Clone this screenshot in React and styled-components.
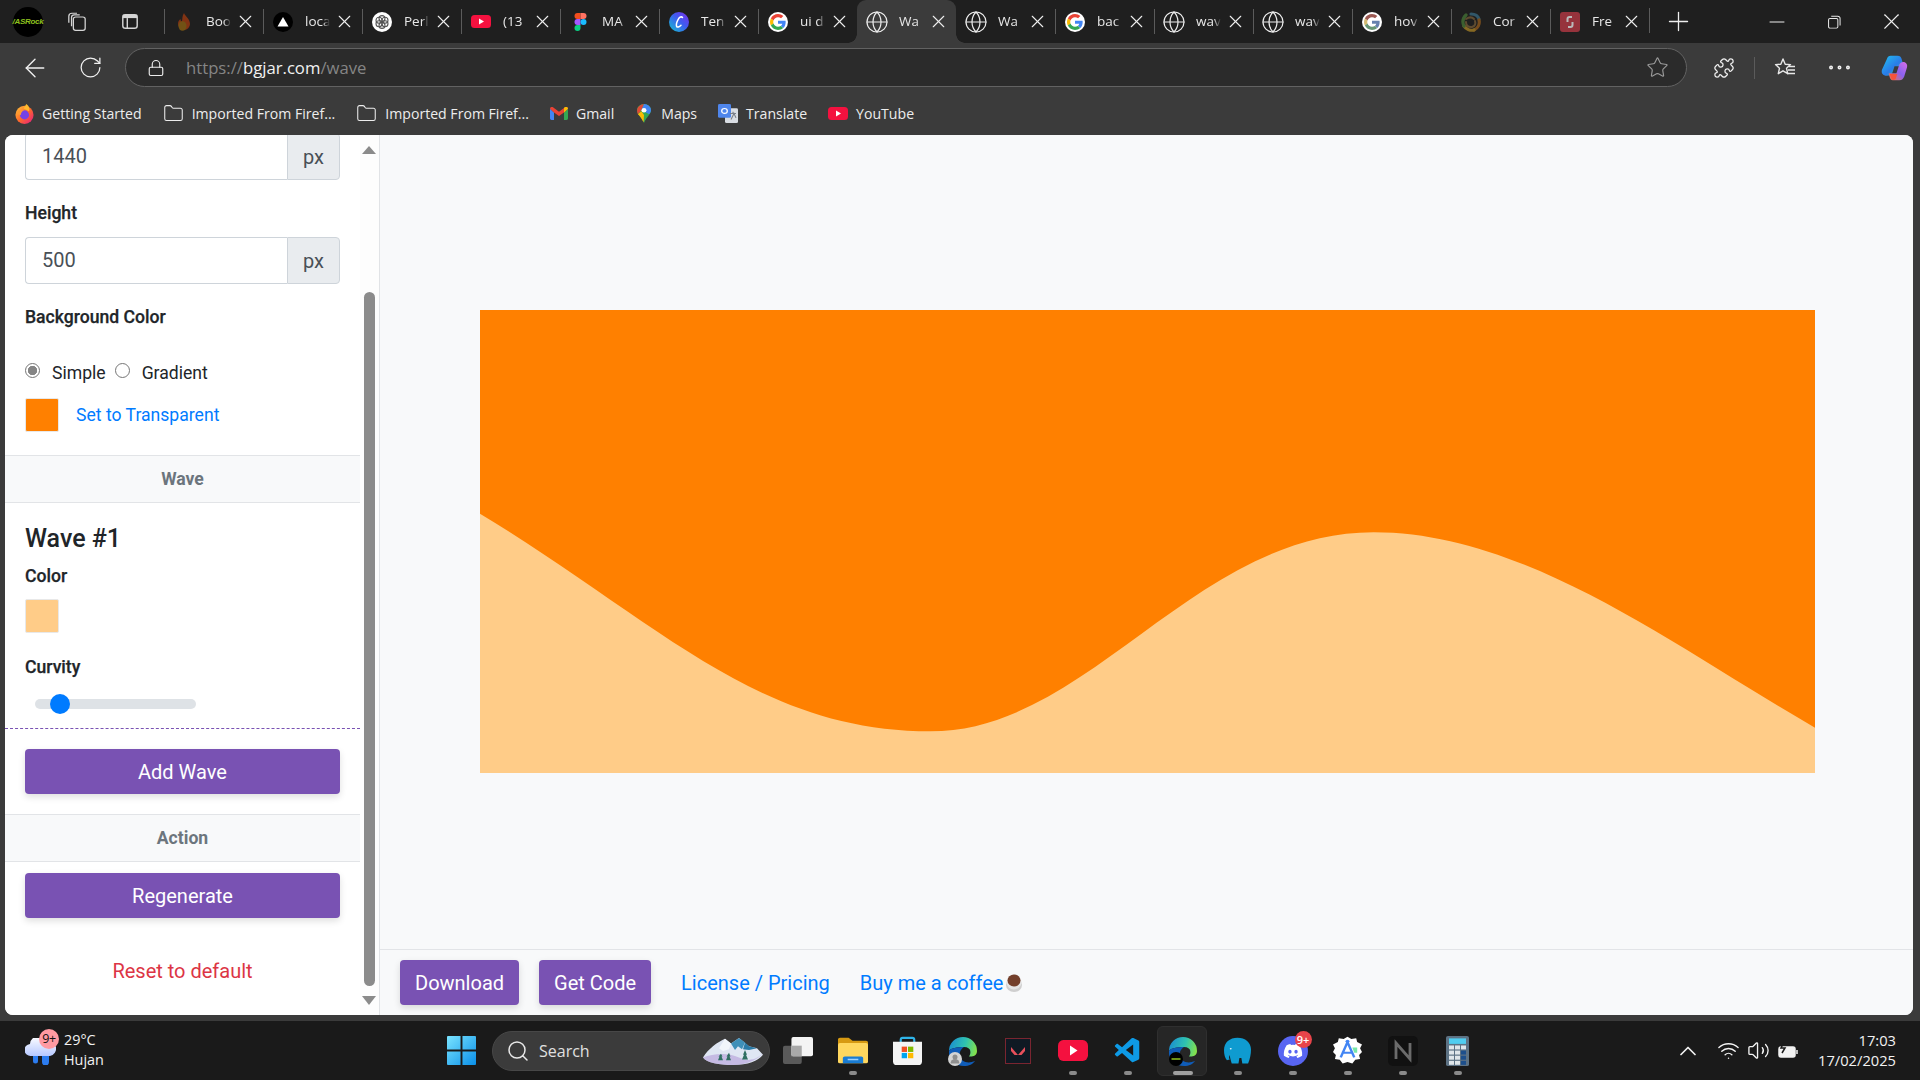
import React from "react";
import styled, { createGlobalStyle } from "styled-components";
import { ArrowLeft, RotateCw, Lock, Star, Minus, Plus, X, Search, Globe, ChevronUp, Wifi, Volume2, Folder, Puzzle, MoreHorizontal } from "lucide-react";
import { FaDiscord } from "react-icons/fa";
import { VscVscode } from "react-icons/vsc";

const Global = createGlobalStyle`
  html, body { margin: 0; padding: 0; background: #3b3b3b; }
  * { box-sizing: border-box; }
  #root { width: 1920px; height: 1080px; overflow: hidden; }
`;

const Shell = styled.div`
  width: 1920px; height: 1080px; display: flex; flex-direction: column;
  background: #3b3b3b; font-family: "Open Sans", "Noto Sans", sans-serif; overflow: hidden;
`;

/* ---------- tab bar ---------- */
const TabBar = styled.div`
  height: 43px; flex: none; display: flex; align-items: stretch; background: #1f1f1f; color: #e8e8e8;
`;
const Leading = styled.div`
  width: 164px; flex: none; display: flex; align-items: center; padding-left: 13px;
`;
const ProfileBadge = styled.div`
  width: 30px; height: 30px; border-radius: 50%; background: #000; display: flex; align-items: center; justify-content: center;
  color: #8fc31f; font: italic 700 8px "Liberation Sans", sans-serif; letter-spacing: -0.3px; white-space: nowrap;
`;
const LeadIcon = styled.div`
  margin-left: ${p => p.$left}px; width: 24px; height: 24px; display: flex; align-items: center; justify-content: center;
`;
const TabStrip = styled.div`display: flex;`;
const Tab = styled.div`
  position: relative; width: 99px; flex: none; display: flex; align-items: center; padding-left: 10px;
  background: ${p => (p.$active ? "#3b3b3b" : "transparent")};
  border-radius: ${p => (p.$active ? "9px 9px 0 0" : "0")};
  &::before {
    content: ""; position: absolute; left: 0; top: 9px; height: 25px; width: 1px;
    background: ${p => (p.$plain ? "transparent" : "#5b5b5b")};
  }
  &::after {
    content: ${p => (p.$active ? '""' : "none")}; position: absolute; left: -9px; right: -9px; bottom: 0; height: 9px; z-index: 0;
    background:
      radial-gradient(circle at 0 0, #1f1f1f 8.5px, #3b3b3b 9px) left bottom / 9px 9px no-repeat,
      radial-gradient(circle at 100% 0, #1f1f1f 8.5px, #3b3b3b 9px) right bottom / 9px 9px no-repeat;
  }
`;
const TabIcon = styled.div`
  width: 20px; height: 20px; flex: none; display: flex; align-items: center; justify-content: center;
  opacity: ${p => (p.$dim ? 0.6 : 1)}; position: relative; z-index: 1;
  > svg { flex: none; }
`;
const TabTitle = styled.div`
  width: 25px; margin: -2px 0 0 12px; flex: none; overflow: hidden; white-space: nowrap; font-size: 13.5px; position: relative; z-index: 1;
  -webkit-mask-image: linear-gradient(90deg, #000 70%, transparent 100%);
  mask-image: linear-gradient(90deg, #000 70%, transparent 100%);
`;
const TabClose = styled.div`
  margin-left: 7px; width: 14px; height: 14px; display: flex; align-items: center; justify-content: center; flex: none; position: relative; z-index: 1;
  > svg { flex: none; }
`;
const EndSeparator = styled.div`
  width: 1px; height: 25px; align-self: center; background: #5b5b5b; margin-top: -2px; flex: none;
`;
const NewTab = styled.div`
  margin-left: 16px; width: 24px; display: flex; align-items: center; justify-content: center; > svg { flex: none; }
`;
const WindowButtons = styled.div`
  margin-left: 75px; display: flex; align-items: center; gap: 33px;
`;
const WinBtn = styled.div`width: 24px; height: 24px; display: flex; align-items: center; justify-content: center; > svg { flex: none; }`;

/* ---------- toolbar ---------- */
const Toolbar = styled.div`height: 45px; flex: none; display: flex; align-items: center; padding: 4px 0 0 23px; color: #f0f0f0;`;
const NavBtn = styled.div`width: 24px; height: 24px; display: flex; align-items: center; justify-content: center; margin-right: ${p => p.$right}px; > svg { flex: none; }`;
const Address = styled.div`
  width: 1562px; height: 39px; border-radius: 20px; border: 1.5px solid #626262; background: #2b2b2b;
  display: flex; align-items: center; padding-left: 21px;
`;
const UrlText = styled.div`
  margin-left: 21px; font-size: 16.7px; color: #858585; flex: 1; white-space: nowrap;
  b { font-weight: 400; color: #f2f2f2; }
`;
const ToolGroup = styled.div`display: flex; align-items: center; margin-left: 26px;`;
const ToolSep = styled.div`width: 1px; height: 22px; background: #5b5b5b; margin: 0 19px;`;

/* ---------- bookmarks ---------- */
const Bookmarks = styled.div`
  height: 47px; flex: none; display: flex; align-items: center; gap: 21px; padding: 4px 0 0 15px; color: #ededed; font-size: 14.1px;
`;
const Bookmark = styled.div`display: flex; align-items: center; gap: 8px; white-space: nowrap; > svg { flex: none; }`;
const PinSlot = styled.div`width: 18px; display: flex; justify-content: center; flex: none;`;

/* ---------- page ---------- */
const Page = styled.div`
  height: 880px; flex: none; margin: 0 7px 0 5px; background: #fff; border-radius: 8px; overflow: hidden; display: flex;
  font-family: Roboto, "Liberation Sans", sans-serif; color: #212529;
`;
const Sidebar = styled.aside`width: 355px; flex: none; overflow: hidden; background: #fff;`;
const SideScroll = styled.div`margin-top: -2px;`;
const Field = styled.div`padding: 0 20px; margin-top: ${p => p.$top || 0}px;`;
const Label = styled.div`font-size: 17.6px; font-weight: 500; line-height: 24px; -webkit-text-stroke: 0.25px #212529;`;
const InputGroup = styled.div`display: flex; height: 47px;`;
const NumInput = styled.input`
  flex: 1; min-width: 0; height: 100%; border: 1px solid #ced4da; border-right: 0; border-radius: 4px 0 0 4px; padding: 0 16px 2px;
  font: 400 20px Roboto, sans-serif; color: #495057; outline: none; background: #fff;
`;
const Unit = styled.div`
  width: 53px; flex: none; border: 1px solid #ced4da; border-radius: 0 4px 4px 0; background: #e9ecef; color: #495057;
  display: flex; align-items: center; justify-content: center; font-size: 20px;
`;
const RadioRow = styled.div`display: flex; align-items: center; height: 24px; font-size: 17.6px;`;
const Radio = styled.input`
  appearance: none; width: 15px; height: 15px; margin: -6px 12px 0 0; border-radius: 50%; border: 1.5px solid #767676; background: #fff; flex: none;
  &:checked { background: radial-gradient(circle, #858585 0 4.4px, #fff 4.9px); }
`;
const RadioText = styled.span`margin-right: 9px;`;
const SwatchRow = styled.div`display: flex; align-items: center; gap: 17px;`;
const Swatch = styled.div`width: 34px; height: 34px; border-radius: 2px; border: 1px solid #e8e8e8; background: ${p => p.$color};`;
const LinkText = styled.a`color: #007bff; font-size: ${p => p.$size || 17.6}px; text-decoration: none; white-space: nowrap;`;
const SectionHead = styled.div`
  margin-top: ${p => p.$top}px; height: 48px; background: #f8f9fa; border-top: 1px solid #e2e4e7; border-bottom: 1px solid #e2e4e7;
  display: flex; align-items: center; justify-content: center; color: #6c757d; font-size: 17.6px; font-weight: 700;
`;
const WaveTitle = styled.h4`margin: 0; font-size: 25px; font-weight: 500; line-height: 29px;`;
const Slider = styled.input`
  appearance: none; display: block; width: 161px; height: 10px; margin: 0 0 0 10px; border-radius: 5px; background: #dee2e6; outline: none;
  &::-webkit-slider-thumb { appearance: none; width: 20px; height: 20px; border-radius: 50%; background: #007bff; border: 0; }
`;
const Dashed = styled.div`margin-top: 19px; border-top: 1px dashed #7952b3;`;
const WideButton = styled.div`
  height: 45px; background: #7952b3; color: #fff; border-radius: 4px; display: flex; align-items: center; justify-content: center;
  font-size: 20px; box-shadow: 0 3px 7px rgba(0,0,0,.13);
`;
const Reset = styled.div`margin-top: 41px; text-align: center; color: #dc3545; font-size: 20px; line-height: 24px;`;

const Rail = styled.div`
  width: 20px; flex: none; background: #fdfdfd; border-right: 1px solid #e1e3e6; display: flex; flex-direction: column; align-items: center; padding-right: 1px;
`;
const ArrowUp = styled.div`
  margin-top: 11px; width: 0; height: 0; border-left: 7px solid transparent; border-right: 7px solid transparent; border-bottom: 8px solid #8b8b8b;
`;
const Thumb = styled.div`width: 11px; height: 694px; margin-top: 138px; border-radius: 6px; background: #8b8b8b;`;
const ArrowDown = styled.div`
  margin-top: 10px; width: 0; height: 0; border-left: 7px solid transparent; border-right: 7px solid transparent; border-top: 9px solid #8b8b8b;
`;

const Main = styled.main`flex: 1; min-width: 0; background: #f8f9fa; display: flex; flex-direction: column;`;
const Stage = styled.div`flex: 1; display: flex; align-items: center; justify-content: center; padding: 0 0 2px 2px;`;
const WaveSvg = styled.svg`width: 1335px; height: 463px; display: block; flex: none;`;
const Footer = styled.div`
  height: 66px; flex: none; border-top: 1px solid #e2e4e7; display: flex; align-items: center; padding-left: 20px;
`;
const FootButton = styled.div`
  height: 45px; padding: 0 15px; background: #7952b3; color: #fff; border-radius: 4px; display: flex; align-items: center; font-size: 20px;
  box-shadow: 0 3px 7px rgba(0,0,0,.13); margin-right: ${p => p.$right}px;
`;
const FootLink = styled(LinkText)`margin-right: ${p => p.$right || 0}px; display: flex; align-items: center;`;

/* ---------- taskbar ---------- */
const Taskbar = styled.div`
  margin-top: 6px; height: 59px; flex: none; background: #1a1a1a; color: #f2f2f2; display: flex; align-items: center; font-size: 14px;
`;
const Weather = styled.div`width: 447px; flex: none; display: flex; align-items: center; padding-left: 25px; height: 100%;`;
const WeatherIcon = styled.div`position: relative; width: 31px; height: 27px; margin-top: 1px; > svg { display: block; }`;
const Badge = styled.div`
  position: absolute; left: 14px; top: -9px; width: 20px; height: 20px; border-radius: 50%; background: #ff9aa2; color: #111; font-size: 12.5px;
  display: flex; align-items: center; justify-content: center; letter-spacing: -.3px;
`;
const WeatherText = styled.div`margin-left: 8px; line-height: 20px; font-size: 14.4px; margin-top: -2px;`;
const SearchBox = styled.div`
  width: 278px; height: 40px; margin-left: 16px; border-radius: 20px; background: #3b3b3b; border: 1px solid #474747; display: flex; align-items: center; padding-left: 13px; font-size: 16px; color: #e0e0e0;
  flex: none; > svg { flex: none; }
`;
const SearchText = styled.div`margin-left: 9px; flex: 1;`;
const Apps = styled.div`display: flex; height: 100%; align-items: center;`;
const TaskApp = styled.div`
  position: relative; width: 55px; height: 50px; display: flex; align-items: center; justify-content: center;
  &::before {
    content: ${p => (p.$active ? '""' : "none")}; position: absolute; left: 2px; right: 3px; top: 0; bottom: 0; border-radius: 6px; background: #262626; border: 1px solid #2f2f2f;
  }
  &::after {
    content: ${p => (p.$run || p.$active ? '""' : "none")}; position: absolute; bottom: 1px; left: 50%; transform: translateX(-50%);
    width: ${p => (p.$active ? 20 : 8)}px; height: 4px; border-radius: 2px; background: ${p => (p.$active ? "#a0a0a0" : "#8a8a8a")};
  }
  > svg, > div { position: relative; z-index: 1; flex: none; }
`;
const Tray = styled.div`margin-left: auto; display: flex; align-items: center; padding-right: 24px;`;
const TrayIcon = styled.div`width: 22px; height: 22px; display: flex; align-items: center; justify-content: center; margin-right: ${p => p.$right}px; > svg { flex: none; }`;
const Clock = styled.div`text-align: right; line-height: 20px; font-size: 14.7px; margin: -2px 0 0 3px;`;
const DiscordDisc = styled.div`
  width: 30px; height: 30px; border-radius: 50%; background: #5865f2; color: #fff; display: flex; align-items: center; justify-content: center; position: relative;
`;
const DiscordBadge = styled.div`
  position: absolute; right: -4px; top: -5px; width: 17px; height: 17px; border-radius: 50%; background: #e8444a; color: #fff; font-size: 11px; font-weight: 600;
  display: flex; align-items: center; justify-content: center;
`;
const CopilotSlot = styled.div`margin-left: 27px; display: flex;`;

/* ---------- drawings ---------- */
const GoogleG = ({ dim }) => (
  <svg width="20" height="20" viewBox="-6 -6 60 60" style={dim ? { filter: "saturate(.4)" } : undefined}>
    <circle cx="24" cy="24" r="30" fill="#fff" />
    <path fill="#EA4335" d="M24 9.5c3.54 0 6.71 1.22 9.21 3.6l6.85-6.85C35.9 2.38 30.47 0 24 0 14.62 0 6.51 5.38 2.56 13.22l7.98 6.19C12.43 13.72 17.74 9.5 24 9.5z" />
    <path fill="#4285F4" d="M46.98 24.55c0-1.57-.15-3.09-.38-4.55H24v9.02h12.94c-.58 2.96-2.26 5.48-4.78 7.18l7.73 6c4.51-4.18 7.09-10.36 7.09-17.65z" />
    <path fill="#FBBC05" d="M10.53 28.59c-.48-1.45-.76-2.99-.76-4.59s.27-3.14.76-4.59l-7.98-6.19C.92 16.46 0 20.12 0 24c0 3.88.92 7.54 2.56 10.78l7.97-6.19z" />
    <path fill="#34A853" d="M24 48c6.48 0 11.93-2.13 15.89-5.81l-7.73-6c-2.15 1.45-4.92 2.3-8.16 2.3-6.26 0-11.57-4.22-13.47-9.91l-7.98 6.19C6.51 42.62 14.62 48 24 48z" />
  </svg>
);
const Flame = () => (
  <svg width="16" height="18" viewBox="0 0 16 18">
    <path d="M8 0c1 3 6 6 6 11a6 6 0 0 1-12 0c0-3 1.500-4 2.500-5 0 1.500.5 2.500 1.500 2.500C6.500 6 6 3 8 0z" fill="#c2410c" />
    <ellipse cx="6.500" cy="13" rx="4" ry="4.800" fill="#a8740f" />
  </svg>
);
const TriangleIcon = () => (
  <svg width="20" height="20" viewBox="0 0 20 20"><circle cx="10" cy="10" r="10" fill="#000" /><path d="M10 5l5.500 9.500h-11z" fill="#fff" /></svg>
);
const KnotIcon = () => (
  <svg width="20" height="20" viewBox="0 0 20 20">
    <circle cx="10" cy="10" r="10" fill="#fff" />
    <g fill="none" stroke="#555" strokeWidth="1.100">
      <circle cx="10" cy="6.600" r="3" /><circle cx="13" cy="8.300" r="3" /><circle cx="13" cy="11.700" r="3" />
      <circle cx="10" cy="13.400" r="3" /><circle cx="7" cy="11.700" r="3" /><circle cx="7" cy="8.300" r="3" />
    </g>
  </svg>
);
const YouTube = ({ w = 20, h = 13 }) => (
  <svg width={w} height={h} viewBox="0 0 20 13" preserveAspectRatio="none"><rect width="20" height="13" rx="3.500" fill="#f4113f" /><path d="M8 3.400l5 3.100-5 3.100z" fill="#fff" /></svg>
);
const Figma = () => (
  <svg width="13" height="18" viewBox="0 0 12 18">
    <path d="M3 0h3v6H3a3 3 0 0 1 0-6z" fill="#f24e1e" />
    <path d="M6 0h3a3 3 0 0 1 0 6H6z" fill="#ff7262" />
    <path d="M3 6h3v6H3a3 3 0 0 1 0-6z" fill="#a259ff" />
    <circle cx="9" cy="9" r="3" fill="#1abcfe" />
    <path d="M3 12h3v3a3 3 0 1 1-3-3z" fill="#0acf83" />
  </svg>
);
const Canva = () => (
  <svg width="20" height="20" viewBox="0 0 20 20">
    <defs><linearGradient id="cv" x1="0" y1="1" x2="1" y2="0"><stop offset="0" stopColor="#12c4cf" /><stop offset=".55" stopColor="#3f5cf0" /><stop offset="1" stopColor="#7d2ae8" /></linearGradient></defs>
    <circle cx="10" cy="10" r="10" fill="url(#cv)" />
    <path d="M13.500 5.500c-1-1.300-3-.4-4 1.300S7 12 7.500 14s3 .8 4.500-.8" fill="none" stroke="#fff" strokeWidth="1.500" strokeLinecap="round" />
  </svg>
);
const Swirl = () => (
  <svg width="20" height="20" viewBox="0 0 20 20">
    <g fill="none" strokeWidth="3.200" strokeLinecap="round">
      <path d="M10 2c4 0 7 2 8 5" stroke="#3d7d9b" /><path d="M18 8c1 4-1 8-5 10" stroke="#b06b1d" />
      <path d="M13 18c-4 1-8-1-10-4" stroke="#c99b26" /><path d="M3 14C1 10 2 6 5 3" stroke="#4e8a3a" />
      <path d="M5 7c3-2 6-2 8 0M14 9c1 3 0 5-3 6M10 15c-3 0-5-2-5-5" stroke="#8a6a3c" strokeWidth="2" />
    </g>
  </svg>
);
const RedSquare = () => (
  <svg width="20" height="20" viewBox="0 0 20 20">
    <rect width="20" height="20" rx="3" fill="#96333c" />
    <path d="M12 5H9.500a2 2 0 0 0-2 2v3M8 15h2.500a2 2 0 0 0 2-2v-3" fill="none" stroke="#b9b9b9" strokeWidth="2" />
  </svg>
);
const Firefox = () => (
  <svg width="19" height="20" viewBox="0 0 20 22">
    <defs><linearGradient id="ff" x1="0" y1="0" x2="1" y2="1"><stop offset="0" stopColor="#ffc83a" /><stop offset=".5" stopColor="#ff6a2a" /><stop offset="1" stopColor="#e31587" /></linearGradient></defs>
    <circle cx="10" cy="12" r="10" fill="url(#ff)" />
    <path d="M12 0c3 2 4 5 3 8L9 5z" fill="#ffb92e" />
    <circle cx="10" cy="12" r="5" fill="#7542e5" />
    <path d="M1 11c3-4 6-4 9-4-3 1-4 3-4 5z" fill="#ff9a2e" />
  </svg>
);
const Gmail = () => (
  <svg width="18" height="13" viewBox="0 0 18 14" preserveAspectRatio="none">
    <path d="M0 2v10.500A1.500 1.500 0 0 0 1.500 14H4V6z" fill="#4285f4" />
    <path d="M14 6v8h2.500A1.500 1.500 0 0 0 18 12.500V2z" fill="#34a853" />
    <path d="M0 2c0-2 2-2.500 3-1.700L9 5l6-4.700C16-.5 18 0 18 2l-4 4-5 3.800L4 6z" fill="#ea4335" />
    <path d="M14 .9V6l4-4c0-2-2-2.500-3-1.700z" fill="#fbbc04" />
  </svg>
);
const MapsPin = () => (
  <svg width="14" height="19" viewBox="0 0 16 24" preserveAspectRatio="none">
    <path d="M8 0a8 8 0 0 1 8 8c0 5-5 8-8 16C5 16 0 13 0 8a8 8 0 0 1 8-8z" fill="#34a853" />
    <path d="M2 3a8 8 0 0 1 6-3l-3 8L1 13C-.5 9 0 5 2 3z" fill="#ea4335" opacity=".95" />
    <path d="M8 0a8 8 0 0 1 8 8c0 2-1 3-2 5L5 8z" fill="#4285f4" />
    <path d="M1 13l4-4 3 5-.5 9C5 18 3 15 1 13z" fill="#fbbc04" />
    <circle cx="8" cy="8" r="2.800" fill="#fff" />
  </svg>
);
const Translate = () => (
  <svg width="20" height="19" viewBox="0 0 20 22" preserveAspectRatio="none">
    <rect x="7" y="5" width="13" height="17" rx="1.500" fill="#d9dde3" />
    <rect width="13" height="16" rx="1.500" fill="#4f86ec" />
    <circle cx="6.500" cy="8" r="2.800" fill="none" stroke="#fff" strokeWidth="1.300" />
    <path d="M12 11h6M15 9v2M13 18l3-7 2 5" fill="none" stroke="#7a808a" strokeWidth="1.100" />
  </svg>
);
const Tabs2 = () => (
  <svg width="20" height="20" viewBox="0 0 22 24" preserveAspectRatio="none" fill="none" stroke="#d5d5d5" strokeWidth="1.400">
    <rect x="7" y="6" width="13" height="16" rx="2.500" /><path d="M5 17V6.500A3 3 0 0 1 8 3.500h6" /><path d="M2 13V5a3.500 3.500 0 0 1 3.500-3.500H11" />
  </svg>
);
const VTabs = () => (
  <svg width="18" height="17" viewBox="0 0 20 20" preserveAspectRatio="none" fill="none" stroke="#d5d5d5" strokeWidth="1.600">
    <rect x="2" y="2" width="16" height="16" rx="3" /><path d="M7 6v12" />
    <rect x="2" y="2" width="16" height="4" fill="#d5d5d5" stroke="none" />
  </svg>
);
const Restore = () => (
  <svg width="13" height="14" viewBox="0 0 14 16" preserveAspectRatio="none" fill="none" stroke="#e8e8e8" strokeWidth="1.100">
    <rect x=".6" y="4" width="10" height="11" rx="1.500" /><path d="M3.500 1.500h7a2.500 2.500 0 0 1 2.500 2.500v8" />
  </svg>
);
const FavStar = () => (
  <svg width="22" height="22" viewBox="0 0 22 22" fill="none" stroke="#e8e8e8" strokeWidth="1.400" strokeLinejoin="round">
    <path d="M9 2l2.200 5.200 5.300.4-4 3.600 1.200 5.500L9 13.800l-4.700 2.900 1.200-5.500-4-3.600 5.300-.4z" />
    <path d="M15 10.500h6M14 14h7M13.500 17.500H21" transform="translate(0 -1)" />
  </svg>
);
const Copilot = () => (
  <svg width="27" height="26" viewBox="0 0 28 30" preserveAspectRatio="none">
    <defs>
      <linearGradient id="cpa" x1="0" y1="0" x2="1" y2="1"><stop offset="0" stopColor="#22c3f0" /><stop offset=".55" stopColor="#2a7be8" /><stop offset="1" stopColor="#3fd98e" /></linearGradient>
      <linearGradient id="cpb" x1="1" y1="0" x2="0" y2="1"><stop offset="0" stopColor="#d96ee8" /><stop offset=".5" stopColor="#8a62f0" /><stop offset="1" stopColor="#f6743c" /></linearGradient>
    </defs>
    <path d="M10 1h7c3 0 4 2 4.500 4l2 8H14l-2 7c-1 3-3 4-6 4-4 0-6-3-5-7L6 5c1-3 2-4 4-4z" fill="url(#cpa)" />
    <path d="M12 29h7c3 0 4-2 5-4l3-11c.8-3-1-6-4-6-2 0-3 1-4 3l-3 10H8c.5 3 1.500 8 4 8z" fill="url(#cpb)" />
    <path d="M9 22h8l-2 6c-2 1-3 1-4 0z" fill="#f6533a" />
  </svg>
);
const Windows = () => (
  <svg width="29" height="29" viewBox="0 0 30 30" style={{ flex: "none" }}>
    <defs><linearGradient id="wn" x1="0" y1="0" x2="1" y2="1"><stop offset="0" stopColor="#7ae4ff" /><stop offset="1" stopColor="#0a8fe8" /></linearGradient></defs>
    <path d="M0 1a1 1 0 0 1 1-1h13v14H0zM16 0h13a1 1 0 0 1 1 1v13H16zM0 16h14v14H1a1 1 0 0 1-1-1zM16 16h14v13a1 1 0 0 1-1 1H16z" fill="url(#wn)" />
  </svg>
);
const Cloud = () => (
  <svg width="31" height="27" viewBox="0 0 31 27">
    <defs><linearGradient id="cl" x1="0" y1="0" x2="0" y2="1"><stop offset="0" stopColor="#fff" /><stop offset="1" stopColor="#b6c8ff" /></linearGradient></defs>
    <path d="M8 16v7a2.500 2.500 0 0 0 5 0v-7zM17 16v8a3.500 3.500 0 0 0 7 0v-8z" fill="#2c7cf0" />
    <path d="M6 18a6 6 0 0 1-1-12 9 9 0 0 1 17-3 7.500 7.500 0 0 1 3 15z" fill="url(#cl)" />
  </svg>
);
const Mountain = () => (
  <svg width="60" height="28" viewBox="0 0 60 30" preserveAspectRatio="none" style={{ marginRight: 6, flex: "none" }}>
    <path d="M0 22C6 12 14 6 22 2l6 5 8-6 10 9 8 2 6 7c-5 7-15 11-30 11C16 30 4 28 0 22z" fill="#dfe6f3" />
    <path d="M22 2l6 5-2 6-6 2-4-3z" fill="#f2f6fb" />
    <path d="M28 7l8-6 6 5-3 7-4-3-3 4z" fill="#3f8fb8" />
    <path d="M42 6l4 4 8 2-8 2-6-1z" fill="#2b7aa6" />
    <path d="M0 22c10-4 24-6 36 0s20 0 24-5c-5 7-15 13-30 13C16 30 4 28 0 22z" fill="#b9a6dc" opacity=".7" />
    <path d="M42 14l2 5h-1l2 5h-6l2-5h-1zM18 18l1.500 3h-1l1.500 4h-5l1.500-4h-1zM26 17l1.500 4h-1l1.500 4h-5l1.500-4h-1z" fill="#2f6f62" />
  </svg>
);
const TaskView = () => (
  <svg width="30" height="27" viewBox="0 0 32 28" preserveAspectRatio="none">
    <rect x="0" y="9" width="20" height="19" rx="2" fill="#5a5a5a" />
    <rect x="9" y="0" width="23" height="20" rx="2" fill="#f4f4f4" />
    <rect x="9" y="9" width="11" height="11" fill="#a9a9a9" />
  </svg>
);
const Explorer = () => (
  <svg width="30" height="27" viewBox="0 0 31 36" preserveAspectRatio="none">
    <path d="M0 3a2 2 0 0 1 2-2h9l4 4h14a2 2 0 0 1 2 2v8H0z" fill="#d79a12" />
    <rect y="8" width="31" height="27" rx="2" fill="#ffd75e" />
    <path d="M5 35v-7a2 2 0 0 1 2-2h17a2 2 0 0 1 2 2v7z" fill="#1a7cd3" />
    <rect x="10" y="29" width="11" height="2" fill="#9fd2ff" />
  </svg>
);
const Store = () => (
  <svg width="29" height="29" viewBox="0 0 30 30">
    <path d="M8 7V4a2 2 0 0 1 2-2h10a2 2 0 0 1 2 2v3" fill="none" stroke="#2fb4e8" strokeWidth="2.200" />
    <path d="M0 6h30v20a4 4 0 0 1-4 4H4a4 4 0 0 1-4-4z" fill="#f4f4f4" />
    <rect x="9" y="11" width="5.500" height="5.500" fill="#f25022" /><rect x="15.500" y="11" width="5.500" height="5.500" fill="#7fba00" />
    <rect x="9" y="17.500" width="5.500" height="5.500" fill="#00a4ef" /><rect x="15.500" y="17.500" width="5.500" height="5.500" fill="#ffb900" />
  </svg>
);
const Edge = ({ id, kind }) => (
  <svg width="30" height="30" viewBox="0 0 30 30">
    <defs>
      <linearGradient id={id} x1="0" y1=".4" x2="1" y2=".6"><stop offset="0" stopColor="#1b8fd0" /><stop offset=".55" stopColor="#2fc3b0" /><stop offset="1" stopColor="#86e24a" /></linearGradient>
    </defs>
    <path d="M1 15A14 14 0 0 1 29 15C29 20 24 21 21 20.500C23 18 24 11 16 11C9 11 3 12 1 15Z" fill={`url(#${id})`} />
    <path d="M1 15C0 24 8 30 16 30C21 30 25 28 27 25C20 28 13 26 12 20C11 16 13 13 16 11C9 11 3 12 1 15Z" fill="#0f5cb8" />
    {kind === "user" && <g><circle cx="7" cy="23" r="7" fill="#d4d4d4" /><circle cx="7" cy="21" r="2.500" fill="#8e8e8e" /><path d="M2.500 27.500a4.500 4.500 0 0 1 9 0z" fill="#8e8e8e" /></g>}
    {kind === "rock" && <g><circle cx="8" cy="23" r="7" fill="#000" /><path d="M3.500 23h9" stroke="#8fc31f" strokeWidth="1.500" /></g>}
  </svg>
);
const Valorant = () => (
  <svg width="26" height="26" viewBox="0 0 26 26">
    <rect x=".5" y=".5" width="25" height="25" fill="#0f1923" stroke="#7a2530" />
    <path d="M6 9l7 8H9.500L6 13zM20 9v4l-3.500 4H13z" fill="#e8505b" />
  </svg>
);
const Elephant = () => (
  <svg width="27" height="28" viewBox="0 0 28 36" preserveAspectRatio="none">
    <path d="M14 1c8 0 14 6 14 15 0 6-1 12-3 18h-6l-1-7h-2l-1 7H8c-1-5-2-8-2-11-1 2-1 4 0 6l-3 1c-2-3-3-8-3-13C0 7 6 1 14 1z" fill="#0f9bd0" />
    <circle cx="7" cy="15" r="1" fill="#e5f6ff" />
  </svg>
);
const Studio = () => (
  <svg width="29" height="29" viewBox="0 0 30 38" preserveAspectRatio="none">
    <path d="M15 1l4 3 5-1 1 5 5 3-2 5 2 5-3 4 1 5-5 1-3 5-5-2-5 2-3-5-5-1 1-5-3-4 2-5-2-5 5-3 1-5 5 1z" fill="#fff" />
    <circle cx="15" cy="7" r="2" fill="#4285f4" />
    <path d="M15 8l-7 20M15 8l7 20M9 22h12" fill="none" stroke="#4285f4" strokeWidth="2.500" />
    <path d="M20 15h5v7h-3z" fill="#3ddc84" opacity=".7" />
  </svg>
);
const NLogo = () => (
  <svg width="30" height="30" viewBox="0 0 30 30">
    <rect width="30" height="30" rx="5" fill="#111" />
    <path d="M8 23V7l14 16V7" fill="none" stroke="#6b6b6b" strokeWidth="2.800" />
  </svg>
);
const Calc = () => (
  <svg width="23" height="30" viewBox="0 0 23 38" preserveAspectRatio="none">
    <rect width="23" height="38" rx="2" fill="#5d7284" />
    <rect x="3" y="3" width="17" height="7" fill="#50cdf0" />
    {[12, 18.5, 25, 31.5].map(y => [3, 9, 15].map(x => (
      <rect key={`${x}${y}`} x={x} y={y} width="5" height="5" fill={x === 15 && y > 15 ? "#1d4f8c" : "#dfe6ea"} />
    )))}
  </svg>
);
const Coffee = () => (
  <svg width="16" height="18" viewBox="0 0 16 18" style={{ marginLeft: 3 }}>
    <ellipse cx="8" cy="11" rx="8" ry="7" fill="#cfcfcf" />
    <ellipse cx="8" cy="8" rx="7.500" ry="7.500" fill="#e6e6e6" />
    <ellipse cx="8" cy="6.500" rx="6.500" ry="6" fill="#74402b" />
  </svg>
);

const XIcon = <X size={21} strokeWidth={1.3} color="#eee" />;
const GlobeIcon = <Globe size={24} strokeWidth={1.2} color="#eee" />;
const tabs = [
  { t: "Boo", i: <Flame />, d: true }, { t: "loca", i: <TriangleIcon /> }, { t: "Perl", i: <KnotIcon /> },
  { t: "(13", i: <YouTube /> }, { t: "MA", i: <Figma /> }, { t: "Ten", i: <Canva /> }, { t: "ui d", i: <GoogleG /> },
  { t: "Wa", i: GlobeIcon, a: true }, { t: "Wa", i: GlobeIcon, plain: true }, { t: "bac", i: <GoogleG /> },
  { t: "wav", i: GlobeIcon }, { t: "wav", i: GlobeIcon }, { t: "hov", i: <GoogleG dim /> }, { t: "Cor", i: <Swirl />, d: true }, { t: "Fre", i: <RedSquare /> },
];

export default function App() {
  return (
    <Shell>
      <Global />
      <TabBar>
        <Leading>
          <ProfileBadge>/ASRock</ProfileBadge>
          <LeadIcon $left={22}><Tabs2 /></LeadIcon>
          <LeadIcon $left={29}><VTabs /></LeadIcon>
        </Leading>
        <TabStrip>
          {tabs.map((x, i) => (
            <Tab key={i} $active={x.a} $plain={x.a || x.plain}>
              <TabIcon $dim={x.d}>{x.i}</TabIcon>
              <TabTitle>{x.t}</TabTitle>
              <TabClose>{XIcon}</TabClose>
            </Tab>
          ))}
        </TabStrip>
        <EndSeparator />
        <NewTab><Plus size={31} strokeWidth={1} color="#eee" /></NewTab>
        <WindowButtons>
          <WinBtn><Minus size={24} strokeWidth={1} color="#eee" /></WinBtn>
          <WinBtn><Restore /></WinBtn>
          <WinBtn><X size={27} strokeWidth={1} color="#eee" /></WinBtn>
        </WindowButtons>
      </TabBar>

      <Toolbar>
        <NavBtn $right={31}><ArrowLeft size={30} strokeWidth={1.1} /></NavBtn>
        <NavBtn $right={23}><RotateCw size={25} strokeWidth={1.2} /></NavBtn>
        <Address>
          <Lock size={18} strokeWidth={1.5} color="#eee" />
          <UrlText>https://<b>bgjar.com</b>/wave</UrlText>
          <Star size={23} strokeWidth={1.2} color="#9a9a9a" style={{ marginRight: 17 }} />
        </Address>
        <ToolGroup>
          <Puzzle size={22} strokeWidth={1.4} />
          <ToolSep />
          <FavStar />
          <MoreHorizontal size={29} strokeWidth={1.3} style={{ marginLeft: 29 }} />
          <CopilotSlot><Copilot /></CopilotSlot>
        </ToolGroup>
      </Toolbar>

      <Bookmarks>
        <Bookmark><Firefox />Getting Started</Bookmark>
        <Bookmark><Folder size={21} strokeWidth={1.2} />Imported From Firef...</Bookmark>
        <Bookmark><Folder size={21} strokeWidth={1.2} />Imported From Firef...</Bookmark>
        <Bookmark><Gmail />Gmail</Bookmark>
        <Bookmark><PinSlot><MapsPin /></PinSlot>Maps</Bookmark>
        <Bookmark><Translate />Translate</Bookmark>
        <Bookmark><YouTube />YouTube</Bookmark>
      </Bookmarks>

      <Page>
        <Sidebar>
          <SideScroll>
            <Field>
              <InputGroup><NumInput defaultValue="1440" /><Unit>px</Unit></InputGroup>
            </Field>
            <Field $top={21}><Label>Height</Label></Field>
            <Field $top={12}>
              <InputGroup><NumInput defaultValue="500" /><Unit>px</Unit></InputGroup>
            </Field>
            <Field $top={21}><Label>Background Color</Label></Field>
            <Field $top={32}>
              <RadioRow>
                <Radio type="radio" name="bg" defaultChecked />
                <RadioText>Simple</RadioText>
                <Radio type="radio" name="bg" />
                <RadioText>Gradient</RadioText>
              </RadioRow>
            </Field>
            <Field $top={13}>
              <SwatchRow><Swatch $color="#ff8000" /><LinkText>Set to Transparent</LinkText></SwatchRow>
            </Field>
            <SectionHead $top={23}>Wave</SectionHead>
            <Field $top={21}><WaveTitle>Wave #1</WaveTitle></Field>
            <Field $top={11}><Label>Color</Label></Field>
            <Field $top={11}><Swatch $color="#ffcc88" /></Field>
            <Field $top={22}><Label>Curvity</Label></Field>
            <Field $top={20}>
              <Slider type="range" min="0" max="100" step="0.1" defaultValue="10.6" />
            </Field>
            <Dashed />
            <Field $top={20}><WideButton>Add Wave</WideButton></Field>
            <SectionHead $top={20}>Action</SectionHead>
            <Field $top={11}><WideButton>Regenerate</WideButton></Field>
            <Reset>Reset to default</Reset>
          </SideScroll>
        </Sidebar>
        <Rail>
          <ArrowUp />
          <Thumb />
          <ArrowDown />
        </Rail>
        <Main>
          <Stage>
            <WaveSvg viewBox="0 0 1440 500" preserveAspectRatio="none">
              <rect width="1440" height="500" fill="#ff8000" />
              <path d="M0,220C190,335,297,455,486,455C657,455,770,240,964,240C1130,240,1290,365,1440,451L1440,500L0,500Z" fill="#ffcc88" />
            </WaveSvg>
          </Stage>
          <Footer>
            <FootButton $right={20}>Download</FootButton>
            <FootButton $right={30}>Get Code</FootButton>
            <FootLink href="#" $size={20} $right={30}>License / Pricing</FootLink>
            <FootLink href="#" $size={20}>Buy me a coffee<Coffee /></FootLink>
          </Footer>
        </Main>
      </Page>

      <Taskbar>
        <Weather>
          <WeatherIcon><Cloud /><Badge>9+</Badge></WeatherIcon>
          <WeatherText>29°C<br />Hujan</WeatherText>
        </Weather>
        <Windows />
        <SearchBox>
          <Search size={24} strokeWidth={1.5} color="#e8e8e8" />
          <SearchText>Search</SearchText>
          <Mountain />
        </SearchBox>
        <Apps>
          <TaskApp><TaskView /></TaskApp>
          <TaskApp $run><Explorer /></TaskApp>
          <TaskApp><Store /></TaskApp>
          <TaskApp><Edge id="e1" kind="user" /></TaskApp>
          <TaskApp><Valorant /></TaskApp>
          <TaskApp $run><YouTube w={30} h={21} /></TaskApp>
          <TaskApp $run><VscVscode size={30} color="#0e9ae5" /></TaskApp>
          <TaskApp $active><Edge id="e2" kind="rock" /></TaskApp>
          <TaskApp $run><Elephant /></TaskApp>
          <TaskApp $run><DiscordDisc><FaDiscord size={20} /><DiscordBadge>9+</DiscordBadge></DiscordDisc></TaskApp>
          <TaskApp $run><Studio /></TaskApp>
          <TaskApp $run><NLogo /></TaskApp>
          <TaskApp $run><Calc /></TaskApp>
        </Apps>
        <Tray>
          <TrayIcon $right={18}><ChevronUp size={28} strokeWidth={1.5} /></TrayIcon>
          <TrayIcon $right={8}><Wifi size={23} strokeWidth={1.5} /></TrayIcon>
          <TrayIcon $right={8}><Volume2 size={23} strokeWidth={1.4} /></TrayIcon>
          <TrayIcon $right={16}>
            <svg width="20" height="17" viewBox="0 0 20 17" fill="none" stroke="#f2f2f2" strokeWidth="1.500"><rect x="1" y="5" width="16" height="10" rx="2" fill="#f2f2f2" /><path d="M19 8v4" /><path d="M6 0L3 6h4L4 11" stroke="#1a1a1a" /></svg>
          </TrayIcon>
          <Clock>17:03<br />17/02/2025</Clock>
        </Tray>
      </Taskbar>
    </Shell>
  );
}
